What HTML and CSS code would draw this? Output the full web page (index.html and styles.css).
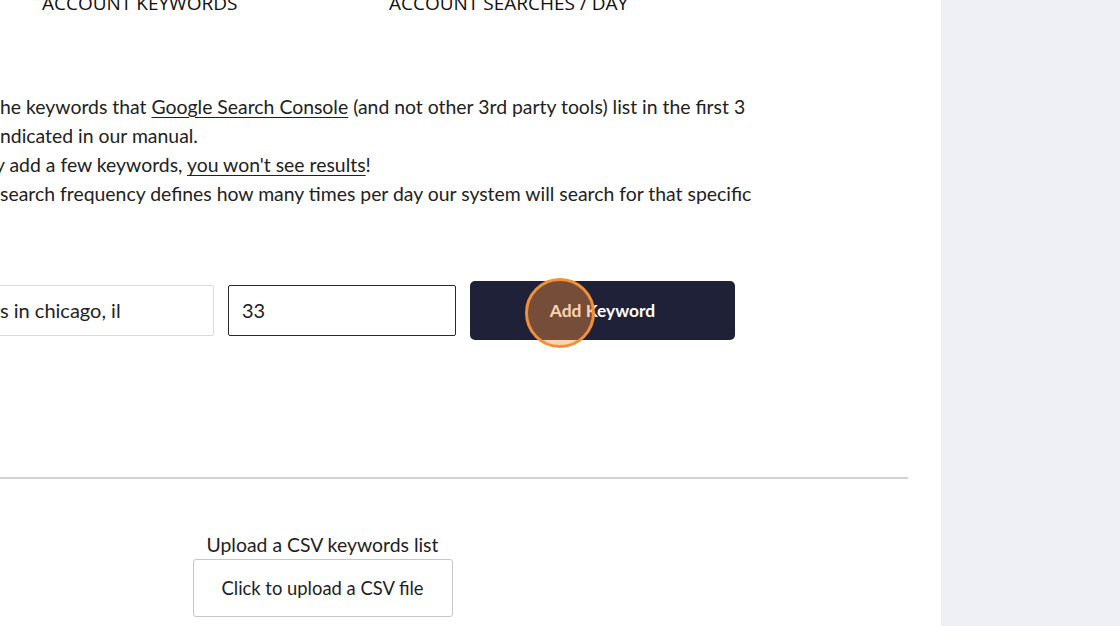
FILE: index.html
```html
<!DOCTYPE html>
<html lang="en">
<head>
<meta charset="utf-8">
<title>Keywords</title>
<link rel="stylesheet" href="styles.css">
</head>
<body>
<div class="page">
  <main class="main">
    <div class="stats">
      <div class="stat stat-kw">ACCOUNT KEYWORDS</div>
      <div class="stat stat-sd">ACCOUNT SEARCHES / DAY</div>
    </div>
    <div class="notes">
      <div class="line"><span class="cut">- Add only t</span>he keywords that <a href="#">Google Search Console</a> (and not other 3rd party tools) list in the first 3</div>
      <div class="line"><span class="cut">pages, as i</span>ndicated in our manual.</div>
      <div class="line line-y"><span class="cut">- If you onl</span>y add a few keywords, <a href="#">you won't see results</a>!</div>
      <div class="line"><span class="cut">- The </span>search frequency defines how many times per day our system will search for that specific</div>
    </div>
    <div class="add-row">
      <div class="field field-kw"><span class="cut">plumber</span>s in chicago, il</div>
      <div class="field field-num">33</div>
      <button class="add-btn" type="button">Add Keyword<span class="click"></span></button>
    </div>
    <div class="divider"></div>
    <div class="upload">
      <div class="upload-label">Upload a CSV keywords list</div>
      <button class="upload-btn" type="button">Click to upload a CSV file</button>
    </div>
  </main>
  <aside class="side"></aside>
</div>
</body>
</html>
```

FILE: styles.css
```css
html, body {
  margin: 0;
  padding: 0;
  background: #ffffff;
  overflow: hidden;
}
body {
  width: 1120px;
  height: 626px;
  font-family: Lato, "Open Sans", sans-serif;
  color: #1e1e1e;
}
.page {
  display: flex;
  height: 626px;
}
.main {
  width: 941px;
  flex: 0 0 941px;
  background: #ffffff;
}
.side {
  flex: 1;
  background: #eff0f5;
}
.stats {
  display: flex;
  margin-top: -9px;
  font-family: "Open Sans", sans-serif;
  font-size: 19px;
  line-height: 24px;
  color: #111;
}
.stat-kw {
  margin-left: 42px;
  width: 347px;
}
.notes {
  margin-top: 77px;
  font-size: 19.4px;
  line-height: 29px;
  color: #222;
}
.line {
  white-space: nowrap;
}
.line-y {
  margin-left: -5px;
}
.line a {
  color: #222;
  text-decoration: underline;
  text-underline-offset: 3px;
}
.cut {
  display: inline-block;
  width: 0;
  direction: rtl;
  white-space: nowrap;
}
.add-row {
  display: flex;
  align-items: center;
  margin-top: 73px;
  height: 58px;
}
.field {
  box-sizing: border-box;
  height: 51px;
  display: flex;
  align-items: center;
  font-size: 20px;
  color: #222;
  background: #fff;
  border-radius: 2px;
  white-space: nowrap;
}
.field-kw {
  width: 260px;
  margin-left: -46px;
  padding-left: 45px;
  border: 1px solid #dcdcdc;
}
.field-num {
  width: 228px;
  margin-left: 14px;
  padding-left: 13px;
  border: 1px solid #2a2a2a;
}
.add-btn {
  position: relative;
  margin-left: 14px;
  width: 265px;
  height: 59px;
  border: none;
  border-radius: 5px;
  background: #1f2139;
  color: #fff;
  font-family: Lato, sans-serif;
  font-weight: 700;
  font-size: 17.4px;
  padding: 0;
  cursor: pointer;
}
.click {
  position: absolute;
  left: 55px;
  top: -3px;
  width: 64px;
  height: 64px;
  border-radius: 50%;
  border: 3px solid #f0913a;
  background: rgba(247, 145, 58, 0.4);
}
.divider {
  margin-top: 138px;
  width: 908px;
  height: 2px;
  background: #d2d2d2;
}
.upload {
  display: flex;
  flex-direction: column;
  align-items: center;
  width: 645px;
  margin-top: 55px;
}
.upload-label {
  font-size: 19.4px;
  line-height: 22px;
  color: #1e1e1e;
}
.upload-btn {
  margin-top: 3px;
  width: 260px;
  height: 58px;
  background: #fff;
  border: 1px solid #c8c8c8;
  border-radius: 3px;
  font-family: Lato, sans-serif;
  font-size: 18.4px;
  color: #1e1e1e;
  padding: 0;
}
```
